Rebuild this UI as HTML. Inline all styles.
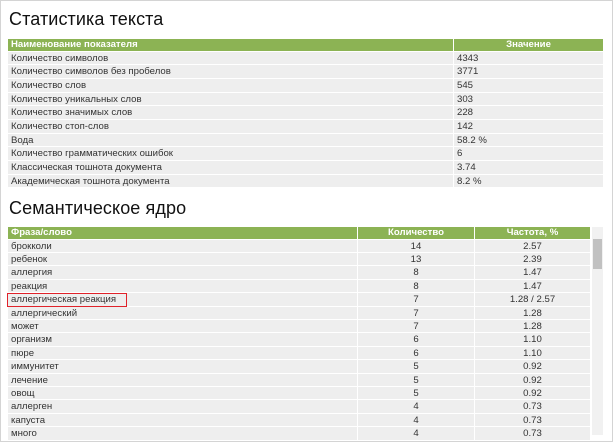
<!DOCTYPE html>
<html><head><meta charset="utf-8"><style>
body{margin:0;width:613px;height:435px;overflow:hidden;background:#fff;font-family:"Liberation Sans","DejaVu Sans",sans-serif;}
.frame{position:absolute;left:0;top:0;width:611px;height:440px;border:1px solid #d4d4d4;}
h1{position:absolute;left:9px;margin:0;font-weight:normal;font-size:18px;color:#111;letter-spacing:0.1px}
table{position:absolute;left:8px;border-collapse:separate;border-spacing:0;table-layout:fixed;font-size:9.6px;color:#333}
td,th{padding:0 0 0 3px;border-right:1px solid #fff;border-bottom:1px solid #fff;background:#eee;white-space:nowrap;overflow:hidden}
td span{position:relative;top:1px}
table.a td{height:12.67px;line-height:12.67px}
table.b td{height:12.4px;line-height:12.4px}
th{background:#8cb354;color:#fff;font-weight:bold;text-align:left;height:11.5px;line-height:11.5px;font-size:9.6px}
th.c,td.c{text-align:center;padding:0}
.sb{position:absolute;left:592px;top:227px;width:11px;height:208px;background:#f1f1f1}
.sb .th{position:absolute;left:1px;top:12px;width:9px;height:30px;background:#c1c1c1}
.red{position:absolute;left:7px;top:293px;width:118px;height:12px;border:1.5px solid #e0222a}
</style></head><body>
<div class="frame"></div>
<h1 style="top:9px">Статистика текста</h1>
<table class="a" style="top:39px;width:596px">
<colgroup><col style="width:446px"><col style="width:150px"></colgroup>
<tr><th>Наименование показателя</th><th class="c">Значение</th></tr>
<tr><td><span>Количество символов</span></td><td><span>4343</span></td></tr>
<tr><td><span>Количество символов без пробелов</span></td><td><span>3771</span></td></tr>
<tr><td><span>Количество слов</span></td><td><span>545</span></td></tr>
<tr><td><span>Количество уникальных слов</span></td><td><span>303</span></td></tr>
<tr><td><span>Количество значимых слов</span></td><td><span>228</span></td></tr>
<tr><td><span>Количество стоп-слов</span></td><td><span>142</span></td></tr>
<tr><td><span>Вода</span></td><td><span>58.2 %</span></td></tr>
<tr><td><span>Количество грамматических ошибок</span></td><td><span>6</span></td></tr>
<tr><td><span>Классическая тошнота документа</span></td><td><span>3.74</span></td></tr>
<tr><td><span>Академическая тошнота документа</span></td><td><span>8.2 %</span></td></tr>
</table>
<h1 style="top:198px">Семантическое ядро</h1>
<table class="b" style="top:227px;width:583px">
<colgroup><col style="width:350px"><col style="width:117px"><col style="width:116px"></colgroup>
<tr><th>Фраза/слово</th><th class="c">Количество</th><th class="c">Частота, %</th></tr>
<tr><td><span>брокколи</span></td><td class="c"><span>14</span></td><td class="c"><span>2.57</span></td></tr>
<tr><td><span>ребенок</span></td><td class="c"><span>13</span></td><td class="c"><span>2.39</span></td></tr>
<tr><td><span>аллергия</span></td><td class="c"><span>8</span></td><td class="c"><span>1.47</span></td></tr>
<tr><td><span>реакция</span></td><td class="c"><span>8</span></td><td class="c"><span>1.47</span></td></tr>
<tr><td><span>аллергическая реакция</span></td><td class="c"><span>7</span></td><td class="c"><span>1.28 / 2.57</span></td></tr>
<tr><td><span>аллергический</span></td><td class="c"><span>7</span></td><td class="c"><span>1.28</span></td></tr>
<tr><td><span>может</span></td><td class="c"><span>7</span></td><td class="c"><span>1.28</span></td></tr>
<tr><td><span>организм</span></td><td class="c"><span>6</span></td><td class="c"><span>1.10</span></td></tr>
<tr><td><span>пюре</span></td><td class="c"><span>6</span></td><td class="c"><span>1.10</span></td></tr>
<tr><td><span>иммунитет</span></td><td class="c"><span>5</span></td><td class="c"><span>0.92</span></td></tr>
<tr><td><span>лечение</span></td><td class="c"><span>5</span></td><td class="c"><span>0.92</span></td></tr>
<tr><td><span>овощ</span></td><td class="c"><span>5</span></td><td class="c"><span>0.92</span></td></tr>
<tr><td><span>аллерген</span></td><td class="c"><span>4</span></td><td class="c"><span>0.73</span></td></tr>
<tr><td><span>капуста</span></td><td class="c"><span>4</span></td><td class="c"><span>0.73</span></td></tr>
<tr><td><span>много</span></td><td class="c"><span>4</span></td><td class="c"><span>0.73</span></td></tr>
</table>
<div class="sb"><div class="th"></div></div>
<div class="red"></div>
</body></html>
